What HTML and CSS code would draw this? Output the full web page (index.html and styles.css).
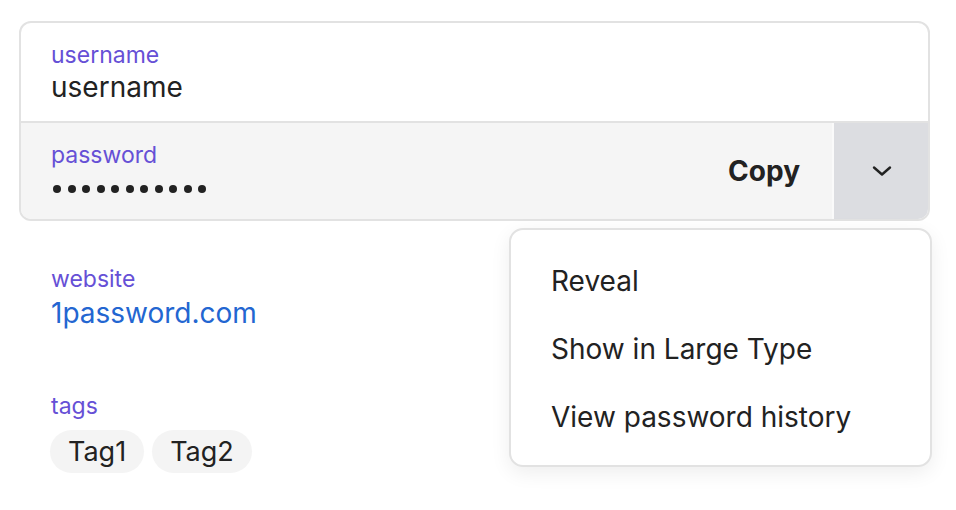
FILE: index.html
```html
<!DOCTYPE html>
<html>
<head>
<meta charset="utf-8">
<link rel="stylesheet" href="styles.css">
</head>
<body>
<div class="page">
  <div class="card">
    <div class="row row-user">
      <div class="field">
        <div class="label">username</div>
        <div class="value">username</div>
      </div>
    </div>
    <div class="row row-pass">
      <div class="field">
        <div class="label">password</div>
        <div class="dots"><span></span><span></span><span></span><span></span><span></span><span></span><span></span><span></span><span></span><span></span><span></span></div>
      </div>
      <div class="copy">Copy</div>
      <div class="toggle">
        <svg class="chevron" width="20" height="12" viewBox="0 0 20 12"><path d="M2 2.5 L10 9.5 L18 2.5" fill="none" stroke="#222" stroke-width="2.4" stroke-linecap="round" stroke-linejoin="round"/></svg>
      </div>
    </div>
  </div>
  <div class="details">
    <div class="section">
      <div class="label">website</div>
      <div class="link">1password.com</div>
    </div>
    <div class="section section-tags">
      <div class="label">tags</div>
      <div class="tags"><span class="tag">Tag1</span><span class="tag">Tag2</span></div>
    </div>
  </div>
  <div class="menu">
    <div class="item">Reveal</div>
    <div class="item">Show in Large Type</div>
    <div class="item">View password history</div>
  </div>
</div>
</body>
</html>
```
FILE: styles.css
```css
* { box-sizing: border-box; }
html, body { margin: 0; padding: 0; background: #fff; }
body { font-family: Inter, "Noto Sans", sans-serif; color: #222; }
.page { position: relative; width: 956px; height: 510px; padding: 21px 0 0 19px; }
.card { width: 911px; border: 2px solid #e2e2e2; border-radius: 12px; overflow: hidden; }
.row { display: flex; align-items: stretch; }
.row-user { height: 98px; }
.row-pass { height: 98px; border-top: 2px solid #e2e2e2; background: #f5f5f5; }
.field { flex: 1; padding: 18px 30px 0; }
.label { font-size: 23px; line-height: 28px; color: #6650d6; }
.value { font-size: 28px; line-height: 36px; color: #222; }
.dots { display: flex; gap: 6.5px; padding: 16px 0 0 2px; }
.dots span { width: 8px; height: 8px; border-radius: 50%; background: #222; }
.copy { display: flex; align-items: center; padding-right: 32px; font-size: 28px; font-weight: 700; color: #222; }
.toggle { width: 96px; display: flex; align-items: center; justify-content: center; background: #dcdde1; border-left: 2px solid #fafafa; }
.chevron { margin-left: 2px; }
.details { padding: 44px 0 0 32px; }
.section-tags { margin-top: 59px; }
.link { font-size: 28px; line-height: 40px; color: #2366d1; }
.tags { display: flex; gap: 8px; margin-top: 10px; margin-left: -1px; }
.tag { height: 43px; padding: 0 18px; border-radius: 22px; background: #f4f4f4; font-size: 27px; line-height: 43px; color: #222; }
.menu { position: absolute; left: 509px; top: 228px; width: 423px; height: 239px; padding-top: 17px; background: #fff; border: 2px solid #e2e2e2; border-radius: 14px; box-shadow: 0 6px 20px rgba(0,0,0,0.07); }
.item { height: 68px; line-height: 68px; padding-left: 40px; font-size: 28px; color: #222; }
```
